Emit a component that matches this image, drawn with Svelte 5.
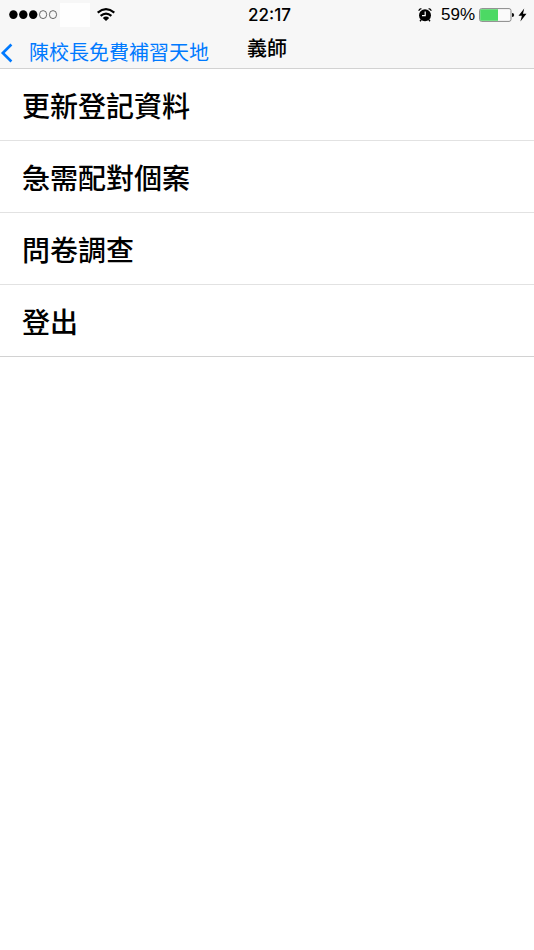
<script>
  const items = ['更新登記資料', '急需配對個案', '問卷調查', '登出'];
  const signal = [true, true, true, false, false];
</script>

<div class="screen">
  <header>
    <div class="status">
      <div class="side">
        <svg class="signal" width="50" height="10" viewBox="0 0 50 10" aria-hidden="true">
          {#each signal as on, i}
            <ellipse cx={5.4 + i * 9.9} cy="4.6" rx={on ? 4.2 : 3.6} ry={on ? 4.4 : 4} fill={on ? '#000' : 'none'} stroke={on ? 'none' : '#444'} stroke-width="0.8" />
          {/each}
        </svg>
        <span class="carrier"></span>
        <svg class="wifi" width="20" height="14" viewBox="0 0 20 14" aria-hidden="true">
          <g fill="none" stroke="#000" stroke-width="2.2">
            <path d="M1.7 4.6Q10-2.2 18.3 4.6" />
            <path d="M4.6 7.9Q10 3.4 15.4 7.9" />
          </g>
          <path d="M6.8 10Q10 7.2 13.2 10L10 13Z" />
        </svg>
      </div>
      <span class="time">22:17</span>
      <div class="side right">
        <svg class="alarm" width="14" height="14" viewBox="0 0 14 14" aria-hidden="true">
          <circle cx="7" cy="7.2" r="6" />
          <path d="M3.2 11.8L2 13.2M10.8 11.8L12 13.2" stroke="#000" stroke-width="1.4" />
          <path d="M0.7 2.8Q1.4 1 3.4 0.7M13.3 2.8Q12.6 1 10.6 0.7" fill="none" stroke="#000" stroke-width="1.2" />
          <path d="M7.2 3.5V7.7H4" fill="none" stroke="#fff" stroke-width="1.2" />
        </svg>
        <span class="percent">59%</span>
        <svg class="battery" width="36" height="14" viewBox="0 0 36 14" aria-hidden="true">
          <rect x="0.6" y="0.6" width="31.4" height="12.8" rx="2" fill="#fafafa" stroke="#888" stroke-width="1" />
          <path d="M2.2 1.2H19V12.8H2.2Q1.2 12.8 1.2 11.8V2.2Q1.2 1.2 2.2 1.2Z" fill="#4cd964" />
          <path d="M33 5Q35.2 5 35.2 7T33 9Z" fill="#111" />
        </svg>
        <svg class="bolt" width="9" height="14" viewBox="0 0 9 14" aria-hidden="true">
          <path d="M6.2 0.5L0.5 7.8H3.9L2.4 13.5L8.5 5.8H5Z" />
        </svg>
      </div>
    </div>
    <nav>
      <a href="#back">
        <svg width="13" height="20" viewBox="0 0 13 20" aria-hidden="true">
          <path d="M11.4 1.5L2.8 10L11.4 18.5" fill="none" stroke="#007aff" stroke-width="2.6" />
        </svg>
        <span>陳校長免費補習天地</span>
      </a>
      <h1>義師</h1>
    </nav>
  </header>
  <main>
    {#each items as item}
      <button type="button">{item}</button>
    {/each}
  </main>
</div>

<style>
  :global(body) {
    background: #fff;
  }
  .screen {
    font-family: Inter, "Noto Sans CJK TC", sans-serif;
    color: #000;
  }
  header {
    background: #f7f7f7;
    border-bottom: 1px solid #d2d2d2;
  }
  .status {
    display: grid;
    grid-template-columns: 1fr auto 1fr;
    align-items: center;
    height: 30px;
    padding: 0 7px 0 8px;
  }
  .side {
    display: flex;
    align-items: center;
  }
  .right {
    justify-content: flex-end;
  }
  .carrier {
    width: 30px;
    height: 24px;
    margin: 0 6px 0 2px;
    background: #fefefe;
  }
  .time {
    padding-left: 4px;
    font-size: 17px;
    font-weight: 500;
  }
  .percent {
    margin: 0 4px 0 9px;
    font: 17px "Liberation Sans", sans-serif;
  }
  .bolt {
    margin-left: 3px;
  }
  nav {
    display: grid;
    grid-template-columns: 1fr auto 1fr;
    height: 38px;
  }
  nav a {
    display: flex;
    align-items: center;
    gap: 16px;
    padding-top: 8px;
    color: #007aff;
    font-size: 20px;
    line-height: 30px;
    text-decoration: none;
    white-space: nowrap;
  }
  h1 {
    margin: 0;
    font-size: 20px;
    font-weight: 500;
    line-height: 38px;
  }
  main {
    display: flex;
    flex-direction: column;
  }
  main button {
    height: 72px;
    padding: 0 22px;
    border: 0;
    border-bottom: 1px solid #e2e2e2;
    background: #fff;
    color: #000;
    font: inherit;
    font-size: 28px;
    font-weight: 500;
    text-align: left;
  }
  main button:last-child {
    border-bottom-color: #d2d2d2;
  }
</style>
